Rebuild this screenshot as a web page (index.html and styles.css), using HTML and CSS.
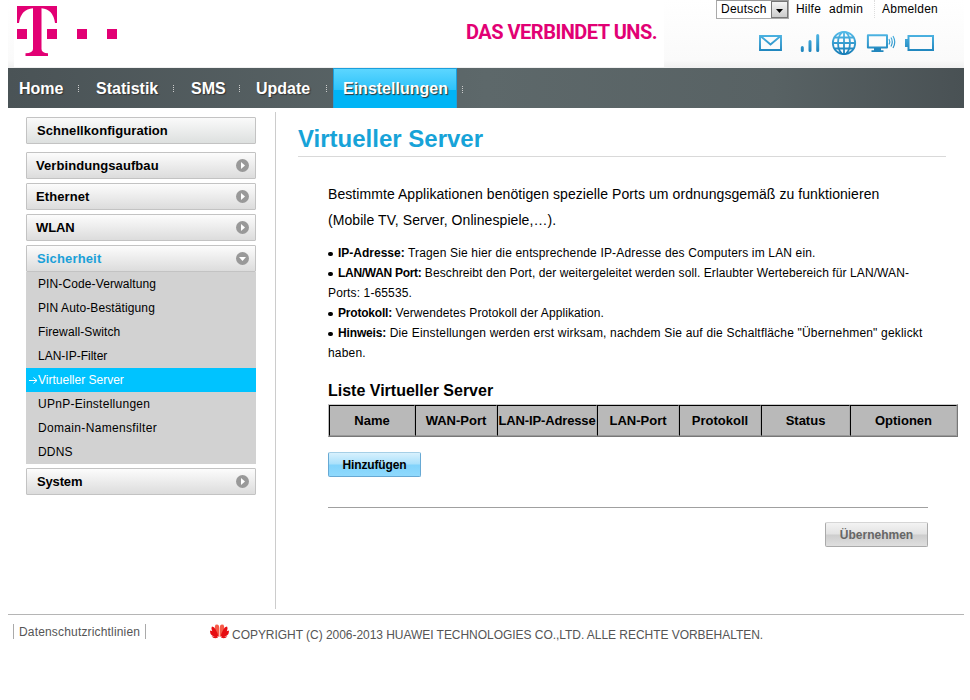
FILE: index.html
```html
<!DOCTYPE html>
<html lang="de">
<head>
<meta charset="utf-8">
<title>Virtueller Server</title>
<link rel="stylesheet" href="styles.css">
</head>
<body>
<div class="page">
  <header class="header">
    <div class="brand">
      <svg class="logo" width="101" height="50" viewBox="0 0 101 50" fill="#e20074"><path d="M0 0H40V17H38Q36 3 24.5 2.300V43Q24.500 47 31 47.300V50H8.500V47.300Q16 47 16 43V2.300Q4 3 2 17H0Z"/><path d="M0 23H10V33H0ZM30 23H40V33H30ZM60 23H70V33H60ZM90 23H100V33H90Z"/></svg>
      <span class="slogan">DAS VERBINDET UNS.</span>
    </div>
    <div class="tools">
      <div class="userbar">
        <div class="lang"><span class="lang-name">Deutsch</span><span class="lang-arrow"><svg width="7" height="4" viewBox="0 0 7 4"><path d="M0 0H7L3.500 4Z"/></svg></span></div>
        <span class="help">Hilfe</span><span class="user">admin</span><span class="logout">Abmelden</span>
      </div>
      <svg class="status" width="178" height="26" viewBox="0 0 178 26" fill="none" stroke="url(#blue)">
        <defs><linearGradient id="blue" gradientUnits="userSpaceOnUse" x1="0" y1="1" x2="0" y2="25"><stop offset="0" stop-color="#57bdea"/><stop offset="1" stop-color="#147bb5"/></linearGradient></defs>
        <path d="M2 6H23V20H2ZM3 6.500L12.500 14.500L22 6.500" stroke-width="1.900"/>
        <path d="M44.300 17.500V20.500M52 11.500V20.500M59.700 5.500V20.500" stroke-width="3" stroke-linecap="round"/>
        <g stroke-width="1.800"><circle cx="86" cy="13" r="11.200"/><ellipse cx="86" cy="13" rx="6" ry="11.200"/><path d="M86 2V24M75 13H97M77 7.500H95M77 18.500H95"/></g>
        <path d="M109.900 5.200H129V17.500H109.900Z" stroke-width="2" stroke-linejoin="round"/>
        <path d="M116 18H123V20.200H125.500V22H113.500V20.200H116Z" fill="#2186bd" stroke="none"/>
        <path d="M131 9Q132.500 11.500 131 14.500M133 7.500Q135.500 11.500 133 16.500M135 6Q138.500 12 135 18" stroke-width="1.200"/>
        <path d="M150.500 6H175V20H150.500Z" stroke-width="2"/><path d="M148.500 9V17" stroke-width="3"/>
      </svg>
    </div>
  </header>
  <nav class="nav">
    <a class="home">Home</a><a class="stat">Statistik</a><a class="sms">SMS</a><a class="update">Update</a><a class="active">Einstellungen</a>
  </nav>
  <div class="main">
    <aside class="side">
      <div class="item first">Schnellkonfiguration</div>
      <div class="item verb">Verbindungsaufbau<svg width="13" height="13" viewBox="0 0 13 13"><circle cx="6.500" cy="6.500" r="6.500" fill="#999"/><path d="M5 3V10L9 6.500Z" fill="#fff"/></svg></div>
      <div class="item ether">Ethernet<svg width="13" height="13" viewBox="0 0 13 13"><circle cx="6.500" cy="6.500" r="6.500" fill="#999"/><path d="M5 3V10L9 6.500Z" fill="#fff"/></svg></div>
      <div class="item wlan">WLAN<svg width="13" height="13" viewBox="0 0 13 13"><circle cx="6.500" cy="6.500" r="6.500" fill="#999"/><path d="M5 3V10L9 6.500Z" fill="#fff"/></svg></div>
      <div class="item open">Sicherheit<svg width="13" height="13" viewBox="0 0 13 13"><circle cx="6.500" cy="6.500" r="6.500" fill="#999"/><path d="M3 5H10L6.500 9Z" fill="#fff"/></svg></div>
      <ul class="sub">
        <li class="s1">PIN-Code-Verwaltung</li>
        <li class="s2">PIN Auto-Bestätigung</li>
        <li class="s3">Firewall-Switch</li>
        <li class="s4">LAN-IP-Filter</li>
        <li class="current"><svg width="9" height="7" viewBox="0 0 9 7" fill="none" stroke="#fff"><path d="M0 3.500H8M4.500 .5L8 3.500L4.500 6.500"/></svg>Virtueller Server</li>
        <li class="s6">UPnP-Einstellungen</li>
        <li class="s7">Domain-Namensfilter</li>
        <li class="s8">DDNS</li>
      </ul>
      <div class="item system">System<svg width="13" height="13" viewBox="0 0 13 13"><circle cx="6.500" cy="6.500" r="6.500" fill="#999"/><path d="M5 3V10L9 6.500Z" fill="#fff"/></svg></div>
    </aside>
    <main class="content">
      <h1>Virtueller Server</h1>
      <div class="body">
        <p class="intro">Bestimmte Applikationen benötigen spezielle Ports um ordnungsgemäß zu funktionieren<br>(Mobile TV, Server, Onlinespiele,…).</p>
        <div class="notes">
          <div class="n1"><i></i><b>IP-Adresse:</b> Tragen Sie hier die entsprechende IP-Adresse des Computers im LAN ein.</div>
          <div class="n2"><i></i><b>LAN/WAN Port:</b> Beschreibt den Port, der weitergeleitet werden soll. Erlaubter Wertebereich für LAN/WAN-</div>
          <div class="n3">Ports: 1-65535.</div>
          <div class="n4"><i></i><b>Protokoll:</b> Verwendetes Protokoll der Applikation.</div>
          <div class="n5"><i></i><b>Hinweis:</b> Die Einstellungen werden erst wirksam, nachdem Sie auf die Schaltfläche "Übernehmen" geklickt</div>
          <div class="n6">haben.</div>
        </div>
        <h2>Liste Virtueller Server</h2>
        <div class="table"><div>Name</div><div>WAN-Port</div><div class="lanip">LAN-IP-Adresse</div><div>LAN-Port</div><div>Protokoll</div><div>Status</div><div>Optionen</div></div>
        <div class="button add">Hinzufügen</div>
        <div class="actions"><div class="button apply">Übernehmen</div></div>
      </div>
    </main>
  </div>
  <footer class="footer">
    <span class="privacy">Datenschutzrichtlinien</span>
    <svg class="huawei" width="19" height="15" viewBox="0 0 19 15" fill="#e60d12"><path d="M9.200 13Q3 6 5.500 .8Q9.200 -.5 9.200 4ZM9.800 13Q16 6 13.500 .8Q9.800 -.5 9.800 4Z" fill="#f65a48"/><path d="M8.600 13Q-.5 7 2 2.500Q6 3 8.600 13ZM10.400 13Q19.500 7 17 2.500Q13 3 10.400 13ZM8 13.500Q-1 12.500 .2 6.500Q5 7.500 8 13.500ZM11 13.500Q20 12.500 18.800 6.500Q14 7.500 11 13.500ZM8 13.600Q4 15.500 1.500 12.300ZM11 13.600Q15 15.500 17.500 12.300Z"/></svg>
    <span class="copyright">COPYRIGHT (C) 2006-2013 HUAWEI TECHNOLOGIES CO.,LTD. ALLE RECHTE VORBEHALTEN.</span>
  </footer>
</div>
</body>
</html>
```
FILE: styles.css
```css
* { box-sizing: border-box; }
body { margin: 0; background: #fff; color: #000; font: 12px "Liberation Sans", Arial, sans-serif; white-space: nowrap; overflow: hidden; }
.page { width: 956px; margin-left: 8px; }

.header { height: 68px; display: flex; padding-left: 6px; background: linear-gradient(#fff, #fafafa 88%, #f0f0f0); }
.brand { width: 650px; height: 67px; background: #fff; display: flex; align-items: flex-start; padding: 6px 0 0 3px; }
.slogan { margin: 15px 0 0 348px; color: #e20074; font: bold 20px/23px Roboto, sans-serif; letter-spacing: -0.5px; }
.tools { width: 300px; padding-left: 52px; }
.userbar { height: 18px; display: flex; line-height: 18px; }
.lang { width: 73px; height: 19px; border: 1px solid #aaa; border-top: 1px solid #999; background: #fff; display: flex; justify-content: space-between; padding: 0 0 0 4px; line-height: 16px; }
.lang-name { letter-spacing: .25px; }
.lang-arrow { width: 17px; height: 17px; border: 1px solid #777; background: linear-gradient(#f5f5f5, #ccc); display: flex; align-items: center; justify-content: center; padding-top: 3px; }
.help { margin-left: 7px; width: 33px; letter-spacing: .2px; }
.user { width: 46px; border-right: 1px dotted #ddd; letter-spacing: .3px; }
.logout { margin-left: 7px; letter-spacing: .25px; }
.status { display: block; margin: 12px 0 0 42px; }

.nav { height: 40px; display: flex; padding-left: 11px; background: linear-gradient(90deg, #4a5356, #5d686a 50%, #586264 80%, #495154); color: #fff; font: bold 16px/41px "Liberation Sans", Arial, sans-serif; text-shadow: 1px 1px 1px #333; }
.nav a { position: relative; height: 40px; }
.nav a::after { content: ""; position: absolute; top: 17px; left: var(--sep); width: 1px; height: 7px; background: repeating-linear-gradient(#ccc 0 1px, transparent 1px 2px); }
.home { width: 77px; --sep: 59px; }
.stat { width: 95px; --sep: 77px; }
.sms { width: 65px; --sep: 48px; }
.update { width: 77px; --sep: 70px; }
.nav .active { width: 124px; padding-left: 9px; border: 1px solid #1b9fdc; border-bottom: 0; line-height: 39px; background: linear-gradient(#5cd6ff, #2dc2f9 54%, #00b4f5 55%); --sep: 128px; }

.main { display: flex; height: 506px; }
.side { width: 268px; margin: 4px 0 5px; border-right: 1px solid #ccc; padding: 5px 19px 0 18px; }
.item { height: 27px; margin-bottom: 4px; border: 1px solid #c3c3c3; border-radius: 1px; background: linear-gradient(#fcfcfc, #dcdcdc); display: flex; align-items: center; justify-content: space-between; padding: 0 6px 0 9px; font-weight: bold; font-size: 13px; letter-spacing: .08px; }
.first { margin-bottom: 8px; padding-left: 10px; background: linear-gradient(#fafafa, #dde0df); }
.open { color: #1aa0d8; margin-bottom: 0; padding-left: 10px; letter-spacing: .15px; }
.system { padding-left: 10px; letter-spacing: -.15px; }
.wlan { letter-spacing: -.1px; }
.sub { list-style: none; margin: 0 0 4px; padding: 0; background: #d2d2d2; }
.sub li { height: 24px; line-height: 24px; padding-left: 12px; }
.s1, .s2, .s3 { letter-spacing: .11px; }
.s6 { letter-spacing: .27px; }
.s7 { letter-spacing: .33px; }
.s8 { letter-spacing: .2px; }
.sub .current { background: #00c3ff; color: #fff; padding-left: 3px; }
.content { padding-left: 22px; width: 688px; }
h1 { margin: 0; width: 648px; height: 49px; padding-top: 17px; border-bottom: 1px solid #d9d9d9; color: #17a3d8; font-size: 24px; line-height: 28px; }
.body { padding: 24px 0 0 30px; }
.intro { margin: 0; font-size: 14px; line-height: 26px; letter-spacing: .07px; }
.notes { margin-top: 10px; line-height: 20px; }
.notes i { display: inline-block; width: 4.5px; height: 4.5px; border-radius: 50%; background: #000; margin-right: 5.5px; vertical-align: 1px; }
.n1 { letter-spacing: .16px; }
.n1 b { letter-spacing: 0; }
.n2 { letter-spacing: .09px; }
.n2 b { letter-spacing: -.3px; }
.n3 { letter-spacing: .13px; }
.n4 { letter-spacing: .1px; }
.n4 b { letter-spacing: -.2px; }
.n5 { letter-spacing: .18px; }
.n5 b { letter-spacing: -.15px; }
.n6 { letter-spacing: .2px; }
h2 { margin: 18px 0 0; font-size: 16px; line-height: 20px; }
.table { width: 630px; height: 33px; margin-top: 3px; border-left: 1px solid #bbb; border-top: 1px solid #ccc; border-right: 1px solid #777; border-bottom: 1px solid #777; margin-top: 3px; display: grid; grid-template-columns: 86px 82px 100px 82px 82px 89px 107px; font-size: 13px; font-weight: bold; line-height: 29px; text-align: center; }
.table div { background: #b9b9b9; border: 1px solid #000; border-right-color: #aaa; border-bottom-color: #999; }
.table .lanip { letter-spacing: -.13px; }
.button { height: 25px; line-height: 24px; border-radius: 2px; text-align: center; font-weight: bold; }
.add { width: 93px; margin-top: 15px; border: 1px solid #67a9d4; border-top-color: #a5cfe6; letter-spacing: -.15px; background: linear-gradient(#d8f1fd, #a9e0fb 48%, #81d3fb 52%, #8fd9fd); }
.actions { width: 600px; margin-top: 30px; border-top: 1px solid #a0a0a0; padding-top: 14px; display: flex; justify-content: flex-end; }
.apply { width: 103px; border: 1px solid #aaa; border-top-color: #d5d5d5; color: #666; background: linear-gradient(#f3f3f3, #e2e2e2 48%, #cdcdcd 52%, #dfdfdf); }
.footer { border-top: 1px solid #b5b5b5; display: flex; color: #555; padding: 9px 0 0 5px; }
.privacy { width: 133px; height: 15px; line-height: 17px; border-left: 1px solid #aaa; border-right: 1px solid #aaa; padding-left: 5px; letter-spacing: .17px; }
.huawei { margin: 0 3px 0 64px; }
.copyright { line-height: 22px; letter-spacing: -.04px; }
```
